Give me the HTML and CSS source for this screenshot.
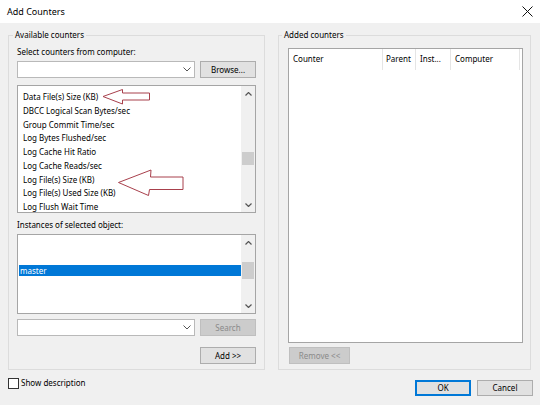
FILE: index.html
```html
<!DOCTYPE html>
<html>
<head>
<meta charset="utf-8">
<link rel="stylesheet" href="styles.css">
</head>
<body>
<div class="window">
  <div class="titlebar">
    <span class="title">Add Counters</span>
    <svg class="close" width="11" height="11" viewBox="0 0 11 11"><path d="M0.5 0.5 L10.5 10.5 M10.5 0.5 L0.5 10.5" stroke="#111" stroke-width="1" fill="none"/></svg>
  </div>
  <div class="content">
    <div class="groups">
      <div class="group group-left">
        <div class="legend">Available counters</div>
        <div class="label first-label">Select counters from computer:</div>
        <div class="row">
          <div class="combo">
            <svg class="chev" width="8" height="5" viewBox="0 0 8 5"><path d="M0.5 0.5 L4 4 L7.5 0.5" stroke="#555" stroke-width="1" fill="none"/></svg>
          </div>
          <div class="btn">Browse...</div>
        </div>
        <div class="listbox counters">
          <div class="items">
            <div class="item">Data File(s) Size (KB)</div>
            <div class="item">DBCC Logical Scan Bytes/sec</div>
            <div class="item">Group Commit Time/sec</div>
            <div class="item">Log Bytes Flushed/sec</div>
            <div class="item">Log Cache Hit Ratio</div>
            <div class="item">Log Cache Reads/sec</div>
            <div class="item">Log File(s) Size (KB)</div>
            <div class="item">Log File(s) Used Size (KB)</div>
            <div class="item">Log Flush Wait Time</div>
          </div>
          <div class="scrollbar">
            <svg class="sb-up" width="7" height="4" viewBox="0 0 7 4"><path d="M0.5 3.5 L3.5 0.5 L6.5 3.5" stroke="#555" stroke-width="1.2" fill="none"/></svg>
            <div class="thumb thumb-counters"></div>
            <svg class="sb-down" width="7" height="4" viewBox="0 0 7 4"><path d="M0.5 0.5 L3.5 3.5 L6.5 0.5" stroke="#555" stroke-width="1.2" fill="none"/></svg>
          </div>
        </div>
        <div class="label inst-label">Instances of selected object:</div>
        <div class="listbox instances">
          <div class="items">
            <div class="selected">master</div>
          </div>
          <div class="scrollbar">
            <svg class="sb-up" width="7" height="4" viewBox="0 0 7 4"><path d="M0.5 3.5 L3.5 0.5 L6.5 3.5" stroke="#555" stroke-width="1.2" fill="none"/></svg>
            <div class="thumb thumb-inst"></div>
            <svg class="sb-down" width="7" height="4" viewBox="0 0 7 4"><path d="M0.5 0.5 L3.5 3.5 L6.5 0.5" stroke="#555" stroke-width="1.2" fill="none"/></svg>
          </div>
        </div>
        <div class="row search-row">
          <div class="combo">
            <svg class="chev" width="8" height="5" viewBox="0 0 8 5"><path d="M0.5 0.5 L4 4 L7.5 0.5" stroke="#555" stroke-width="1" fill="none"/></svg>
          </div>
          <div class="btn disabled">Search</div>
        </div>
        <div class="row add-row">
          <div class="btn">Add &gt;&gt;</div>
        </div>
      </div>
      <div class="group group-right">
        <div class="legend legend-right">Added counters</div>
        <div class="listview">
          <div class="lv-header">
            <div class="col col-counter">Counter</div>
            <div class="col col-parent">Parent</div>
            <div class="col col-inst">Inst...</div>
            <div class="col col-computer">Computer</div>
          </div>
        </div>
        <div class="row remove-row">
          <div class="btn disabled remove">Remove &lt;&lt;</div>
        </div>
      </div>
    </div>
    <div class="footer">
      <label class="check"><span class="box"></span><span>Show description</span></label>
      <div class="actions">
        <div class="btn ok">OK</div>
        <div class="btn">Cancel</div>
      </div>
    </div>
  </div>
  <svg class="annot" width="540" height="405" viewBox="0 0 540 405">
    <path d="M103 96.5 L122.5 89.5 L122.5 93 L149.5 93 L149.5 100 L122.5 100 L122.5 104 Z" fill="none" stroke="#a8404c" stroke-width="1"/>
    <path d="M118.5 182.5 L151 170 L150.5 177 L183 177 L183 189.5 L149.5 189.5 L148.5 195.5 Z" fill="none" stroke="#a8404c" stroke-width="1"/>
  </svg>
</div>
</body>
</html>
```
FILE: styles.css
```css
* { box-sizing: border-box; }
html, body { margin: 0; padding: 0; }
body {
  width: 540px;
  height: 405px;
  overflow: hidden;
  background: #f0f0f0;
  font-family: "Noto Sans", "DejaVu Sans", sans-serif;
  font-size: 8px;
  color: #000;
}
.window {
  position: relative;
  width: 540px;
  height: 405px;
  display: flex;
  flex-direction: column;
}
.titlebar {
  height: 23px;
  background: #fff;
  display: flex;
  align-items: center;
  justify-content: space-between;
  padding: 0 7px 0 7px;
}
.title { font-size: 9px; line-height: 12px; }
.close { margin-right: 0; }
.content {
  padding: 0 7px 0 8px;
  display: flex;
  flex-direction: column;
}
.groups {
  display: flex;
  gap: 13px;
  margin-top: 12px;
}
.group {
  border: 1px solid #dcdcdc;
  display: flex;
  flex-direction: column;
  padding-bottom: 5px;
}
.group-left { width: 257px; padding-left: 8px; padding-right: 8px; }
.group-right { width: 253px; padding-left: 9px; padding-right: 7px; }
.legend {
  line-height: 12px;
  height: 12px;
  margin-top: -7px;
  margin-left: -4px;
  padding: 0 2px;
  background: #f0f0f0;
  align-self: flex-start;
}
.legend-right { margin-left: -6px; }
.label { line-height: 12px; height: 12px; }
.first-label { margin-top: 5px; }
.inst-label { margin-top: 6px; }
.row { display: flex; justify-content: space-between; align-items: flex-start; }
.first-label + .row { margin-top: 3px; }
.combo {
  width: 178px;
  height: 17px;
  background: #fff;
  border: 1px solid #b9b9b9;
  display: flex;
  align-items: center;
  justify-content: flex-end;
  padding-right: 3px;
}
.btn {
  width: 56px;
  height: 17px;
  background: #e1e1e1;
  border: 1px solid #adadad;
  display: flex;
  align-items: center;
  justify-content: center;
  line-height: 12px;
}
.btn.disabled { background: #cccccc; border-color: #bfbfbf; color: #8a8a8a; }
.listbox {
  background: #fff;
  border: 1px solid #a5a5a5;
  display: flex;
  overflow: hidden;
}
.counters { height: 128px; margin-top: 7px; }
.instances { height: 80px; margin-top: 3px; }
.items { flex: 1; overflow: hidden; }
.counters .items { padding: 4px 0 0 5px; }
.item { line-height: 13.75px; height: 13.75px; white-space: nowrap; }
.instances .items { padding: 30px 0 0 1px; }
.selected {
  background: #0078d7;
  color: #fff;
  height: 11px;
  line-height: 11px;
  padding-left: 1px;
}
.scrollbar {
  width: 14px;
  background: #f0f0f0;
  position: relative;
  display: flex;
  flex-direction: column;
  align-items: center;
}
.sb-up { margin-top: 6px; }
.sb-down { margin-top: auto; margin-bottom: 5px; }
.thumb { width: 12px; background: #cdcdcd; }
.thumb-counters { height: 13px; margin-top: 56px; }
.thumb-inst { height: 17px; margin-top: 17px; }
.search-row { margin-top: 5px; }
.add-row { margin-top: 11px; justify-content: flex-end; }
.listview {
  flex: 1;
  background: #fff;
  border: 1px solid #a5a5a5;
  margin-top: 7px;
}
.lv-header { display: flex; height: 21px; }
.col {
  line-height: 20px;
  padding-left: 4px;
  border-right: 1px solid #e5e5e5;
  white-space: nowrap;
}
.col-counter { width: 94px; }
.col-parent { width: 33px; padding-left: 3px; }
.col-inst { width: 35px; }
.col-computer { width: 69px; }
.remove-row { margin-top: 4px; }
.remove { width: 61px; margin-left: 1px; }
.footer {
  display: flex;
  justify-content: space-between;
  align-items: flex-start;
}
.check {
  display: flex;
  align-items: center;
  margin-top: 7px;
  line-height: 12px;
}
.box {
  width: 11px;
  height: 11px;
  border: 1px solid #333;
  background: #fff;
  margin-right: 2px;
}
.actions { display: flex; gap: 6px; margin-top: 10px; }
.actions .btn { height: 16px; }
.btn.ok { border: 2px solid #0078d7; }
.annot { position: absolute; left: 0; top: 0; pointer-events: none; }
```
